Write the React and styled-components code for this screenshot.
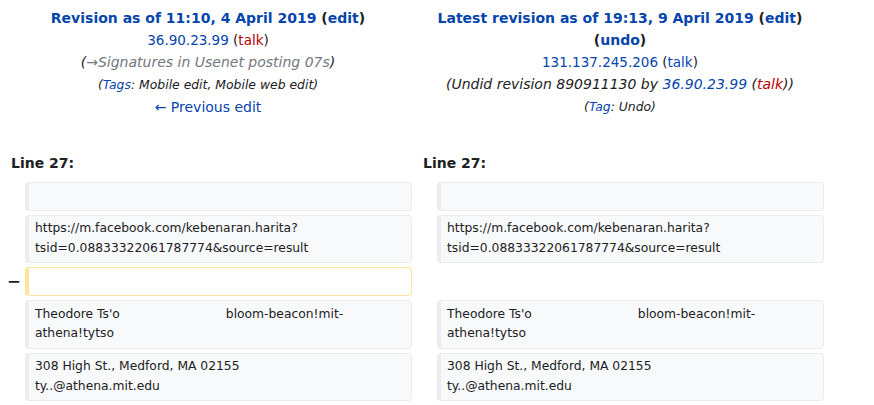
import React from 'react';
import styled, { createGlobalStyle } from 'styled-components';

const GlobalStyle = createGlobalStyle`
  body {
    margin: 0;
    background: #fff;
    color: #202122;
    font-family: "DejaVu Sans", sans-serif;
  }
`;

const DiffGrid = styled.div`
  display: grid;
  grid-template-columns: 17px 387px 17px 387px;
  column-gap: 4px;
  row-gap: 4px;
  padding: 4px;
  width: 830px;
  box-sizing: border-box;
`;

const TitleCell = styled.div`
  grid-column: ${(props) => props.side === 'left' ? '1 / 3' : '3 / 5'};
  text-align: center;
  font-size: 14px;
  line-height: 22px;
  padding-top: 3px;
`;

const TitleLine = styled.div`
  font-weight: ${(props) => props.bold ? 'bold' : 'normal'};
  font-style: ${(props) => props.italic ? 'italic' : 'normal'};
  font-size: ${(props) => props.compact ? '13.5px' : 'inherit'};
`;

const Small = styled.span`
  font-size: 12.4px;
  font-style: italic;
`;

const Link = styled.a`
  color: ${(props) => props.red ? '#ba0000' : '#0645ad'};
  text-decoration: none;
`;

const Comment = styled.span`
  color: #72777d;
`;

const LineNo = styled.div`
  grid-column: ${(props) => props.side === 'left' ? '1 / 3' : '3 / 5'};
  font-weight: bold;
  font-size: 14px;
  line-height: 22px;
  padding: 30px 0 4px 7px;
`;

const Marker = styled.div`
  font-weight: bold;
  font-size: 16.6px;
  line-height: 1.2;
  text-align: right;
  align-self: center;
`;

const Line = styled.div`
  font-size: 12.32px;
  line-height: 19.7px;
  padding: 3.55px 6px;
  min-height: 19.7px;
  border-style: solid;
  border-width: 1px 1px 1px 4px;
  border-radius: 4px;
  white-space: pre-wrap;
  word-wrap: break-word;
  tab-size: 31.8px;
  background: ${(props) => props.kind === 'deleted' ? '#fff' : '#f8f9fa'};
  border-color: ${(props) => props.kind === 'deleted' ? '#ffe49c' : '#eaecf0'};
  color: #202122;
`;

const Empty = styled.div``;

const context = [
  null,
  <>https://m.facebook.com/kebenaran.harita?<wbr />tsid=0.08833322061787774&amp;source=result</>,
];

const contextAfter = [
  'Theodore Ts\'o\t\t\t\tbloom-beacon!mit-athena!tytso',
  '308 High St., Medford, MA 02155\nty..@athena.mit.edu',
];

const ContextRow = ({ text }) => (
  <>
    <Empty />
    <Line>{text}</Line>
    <Empty />
    <Line>{text}</Line>
  </>
);

export default function App() {
  return (
    <>
      <GlobalStyle />
      <DiffGrid>
        <TitleCell side="left">
          <TitleLine bold>
            <Link href="#">Revision as of 11:10, 4 April 2019</Link> (<Link href="#">edit</Link>)
          </TitleLine>
          <TitleLine compact>
            <Link href="#">36.90.23.99</Link> (<Link href="#" red>talk</Link>)
          </TitleLine>
          <TitleLine italic>
            (<Comment>→Signatures in Usenet posting 07s</Comment>)
          </TitleLine>
          <TitleLine>
            <Small>(<Link href="#">Tags</Link>: Mobile edit, Mobile web edit)</Small>
          </TitleLine>
          <TitleLine>
            <Link href="#">← Previous edit</Link>
          </TitleLine>
        </TitleCell>
        <TitleCell side="right">
          <TitleLine bold>
            <Link href="#">Latest revision as of 19:13, 9 April 2019</Link> (<Link href="#">edit</Link>) (<Link href="#">undo</Link>)
          </TitleLine>
          <TitleLine compact>
            <Link href="#">131.137.245.206</Link> (<Link href="#">talk</Link>)
          </TitleLine>
          <TitleLine italic>
            (Undid revision 890911130 by <Link href="#">36.90.23.99</Link> (<Link href="#" red>talk</Link>))
          </TitleLine>
          <TitleLine>
            <Small>(<Link href="#">Tag</Link>: Undo)</Small>
          </TitleLine>
        </TitleCell>

        <LineNo side="left">Line 27:</LineNo>
        <LineNo side="right">Line 27:</LineNo>

        {context.map((text, i) => <ContextRow key={`a${i}`} text={text} />)}

        <Marker>−</Marker>
        <Line kind="deleted" />
        <Empty />
        <Empty />

        {contextAfter.map((text, i) => <ContextRow key={`b${i}`} text={text} />)}
      </DiffGrid>
    </>
  );
}
